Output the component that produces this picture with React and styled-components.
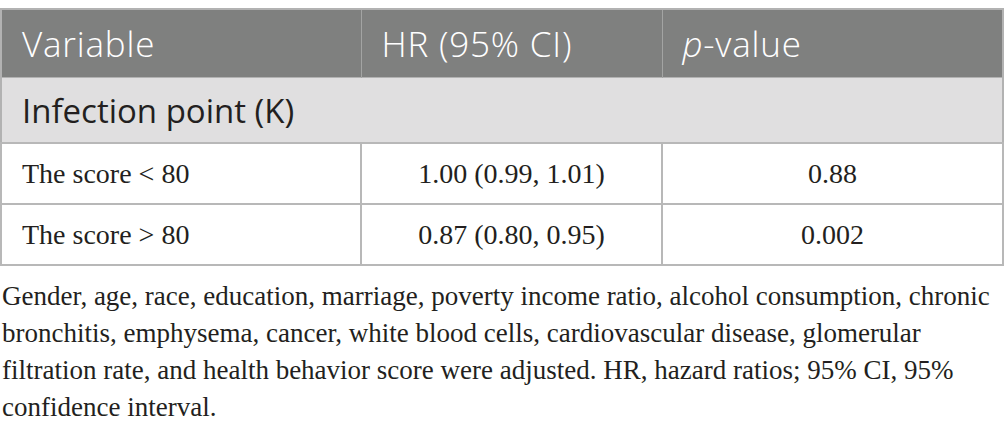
import React from 'react';
import styled, { createGlobalStyle } from 'styled-components';

const GlobalStyle = createGlobalStyle`
  html, body {
    margin: 0;
    padding: 0;
    background: #ffffff;
  }
  body {
    padding-top: 8px;
  }
`;

const Wrapper = styled.div`
  width: 1005px;
`;

const Table = styled.table`
  width: 1004px;
  border-collapse: collapse;
  table-layout: fixed;
  border: 2px solid #b2b2b2;
`;

const HeadCell = styled.th`
  background: #7f807f;
  color: #ffffff;
  font-family: 'Open Sans', 'DejaVu Sans', sans-serif;
  font-weight: 300;
  font-size: 35px;
  letter-spacing: 0.8px;
  text-align: left;
  height: 67px;
  padding: 0 0 0 20px;
  border-left: 1px solid #a3a4a3;
  &:first-child {
    border-left: none;
  }

  em {
    font-style: italic;
  }
`;

const SectionCell = styled.td`
  background: #e0dfe0;
  color: #231f20;
  font-family: 'Open Sans', 'DejaVu Sans', sans-serif;
  font-size: 33px;
  height: 64px;
  padding: 0 0 0 20px;
  border-top: 1px solid #b2b2b2;
`;

const Cell = styled.td`
  color: #231f20;
  font-family: 'Liberation Serif', 'Times New Roman', serif;
  font-size: 28px;
  height: 59px;
  padding: 0 0 0 ${(p) => (p.$center ? '0' : '20px')};
  text-align: ${(p) => (p.$center ? 'center' : 'left')};
  border: 2px solid #b8b8b8;
`;

const Footnote = styled.p`
  margin: 12px 0 0 2px;
  font-family: 'Liberation Serif', 'Times New Roman', serif;
  font-size: 27px;
  line-height: 37px;
  color: #231f20;
`;

const Line = styled.span`
  display: block;
  white-space: nowrap;
`;

const rows = [
  { label: 'The score < 80', hr: '1.00 (0.99, 1.01)', p: '0.88' },
  { label: 'The score > 80', hr: '0.87 (0.80, 0.95)', p: '0.002' },
];

const footLines = [
  'Gender, age, race, education, marriage, poverty income ratio, alcohol consumption, chronic',
  'bronchitis, emphysema, cancer, white blood cells, cardiovascular disease, glomerular',
  'filtration rate, and health behavior score were adjusted. HR, hazard ratios; 95% CI, 95%',
  'confidence interval.',
];

const App = () => {
  return (
    <Wrapper>
      <GlobalStyle />
      <Table>
        <colgroup>
          <col style={{ width: 360 }} />
          <col style={{ width: 301 }} />
          <col />
        </colgroup>
        <thead>
          <tr>
            <HeadCell>Variable</HeadCell>
            <HeadCell>HR (95% CI)</HeadCell>
            <HeadCell>
              <em>p</em>-value
            </HeadCell>
          </tr>
        </thead>
        <tbody>
          <tr>
            <SectionCell colSpan={3}>Infection point (K)</SectionCell>
          </tr>
          {rows.map((r) => (
            <tr key={r.label}>
              <Cell>{r.label}</Cell>
              <Cell $center>{r.hr}</Cell>
              <Cell $center>{r.p}</Cell>
            </tr>
          ))}
        </tbody>
      </Table>
      <Footnote>
        {footLines.map((l) => (
          <Line key={l}>{l}</Line>
        ))}
      </Footnote>
    </Wrapper>
  );
};

export default App;
